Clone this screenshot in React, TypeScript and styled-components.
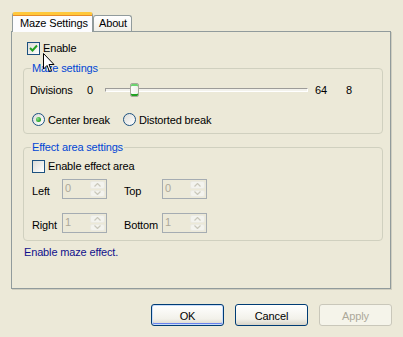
import React from 'react';
import styled, { createGlobalStyle } from 'styled-components';

const GlobalStyle = createGlobalStyle`
  html, body {
    margin: 0;
    padding: 0;
    background: #ece9d8;
  }
  body {
    font-family: "Liberation Sans", Arial, sans-serif;
    font-size: 11px;
    letter-spacing: -0.15px;
    color: #000;
  }
`;

const Dialog = styled.div`
  position: relative;
  width: 403px;
  height: 337px;
  box-sizing: border-box;
  padding: 12px 11px 0 11px;
  background: #ece9d8;
`;

const TabStrip = styled.div`
  display: flex;
  align-items: flex-end;
  height: 20px;
  padding-left: 1px;
  margin-bottom: -1px;
  position: relative;
  z-index: 1;
`;

const Tab = styled.div<{ $active?: boolean }>`
  box-sizing: border-box;
  height: ${p => (p.$active ? '20px' : '16px')};
  margin-bottom: ${p => (p.$active ? '0' : '1px')};
  padding-left: ${p => (p.$active ? '7px' : '5px')};
  border: 1px solid #919b9c;
  border-bottom: none;
  border-top: ${p => (p.$active ? '3px solid #ffc83c' : '1px solid #919b9c')};
  border-radius: 3px 3px 0 0;
  background: ${p => (p.$active ? '#fcfcfe' : 'linear-gradient(#ffffff, #f0efe9)')};
  line-height: ${p => (p.$active ? '16px' : '15px')};
  box-shadow: ${p => (p.$active ? 'inset 0 1px 0 #e68b2c' : 'none')};
  white-space: nowrap;
`;

const Panel = styled.div`
  box-sizing: border-box;
  width: 380px;
  height: 258px;
  border: 1px solid #919b9c;
  box-shadow: 1px 1px 0 #d0cebf;
  padding: 10px 7px 0 11px;
  background: #ece9d8;
`;

const CheckRow = styled.label<{ $indent?: number; $top?: number }>`
  display: flex;
  align-items: center;
  gap: 3px;
  height: 13px;
  line-height: 13px;
  margin-left: ${p => p.$indent ?? 0}px;
  margin-top: ${p => p.$top ?? 0}px;
`;

const Box = styled.span`
  box-sizing: border-box;
  width: 13px;
  height: 13px;
  border: 1px solid #1c5180;
  background: linear-gradient(135deg, #dcdcd7, #ffffff);
  display: flex;
  align-items: center;
  justify-content: center;
  flex: none;
`;

const RadioDot = styled.span`
  box-sizing: border-box;
  width: 13px;
  height: 13px;
  border: 1px solid #1c5180;
  border-radius: 50%;
  background: linear-gradient(135deg, #dcdcd7, #ffffff);
  display: flex;
  align-items: center;
  justify-content: center;
  flex: none;
`;

const Dot = styled.span`
  width: 5px;
  height: 5px;
  border-radius: 50%;
  background: radial-gradient(circle at 35% 35%, #8de08d, #21a121 70%);
`;

const Group = styled.fieldset<{ $padBottom: number }>`
  margin: 7px 0 0;
  padding: 0 8px ${p => p.$padBottom}px;
  border: 1px solid #d0d0bf;
  border-radius: 4px;
  min-width: 0;
`;

const Legend = styled.legend`
  color: #0046d5;
  padding: 0 1px;
  margin-left: -1px;
  line-height: 13px;
`;

const SliderRow = styled.div`
  display: flex;
  align-items: center;
  height: 14px;
  margin: 8px 0 0 -2px;
`;

const FixedText = styled.span<{ $w: number }>`
  width: ${p => p.$w}px;
  flex: none;
  white-space: nowrap;
`;

const Track = styled.div`
  position: relative;
  box-sizing: border-box;
  width: 203px;
  height: 4px;
  flex: none;
  border-top: 1px solid #9d9c99;
  border-left: 1px solid #9d9c99;
  border-bottom: 1px solid #ffffff;
  border-right: 1px solid #ffffff;
  background: #f3f2ec;
  margin-right: 7px;
`;

const Thumb = styled.div`
  position: absolute;
  top: -6px;
  box-sizing: border-box;
  width: 9px;
  height: 14px;
  border: 1px solid #a8a89c;
  border-radius: 2px;
  background: linear-gradient(90deg, #ffffff, #f0f0ea);
  box-shadow: inset 0 2px 0 #6cd36f, inset 0 -2px 0 #21a121;
`;

const RadioRow = styled.div`
  display: flex;
  align-items: center;
  height: 13px;
  margin-top: 16px;
`;

const RadioItem = styled.label<{ $w?: number }>`
  display: flex;
  align-items: center;
  gap: 3px;
  width: ${p => (p.$w ? `${p.$w}px` : 'auto')};
  white-space: nowrap;
`;

const SpinRow = styled.div<{ $top: number }>`
  display: flex;
  align-items: flex-end;
  height: 20px;
  margin-top: ${p => p.$top}px;
`;

const SpinLabel = styled.span<{ $w: number; $gap?: number }>`
  width: ${p => p.$w}px;
  margin-left: ${p => p.$gap ?? 0}px;
  flex: none;
  line-height: 13px;
  padding-bottom: 1px;
`;

const Spin = styled.div`
  box-sizing: border-box;
  width: 45px;
  height: 20px;
  flex: none;
  display: flex;
  border: 1px solid #a5acb2;
  background: #ece9d8;
`;

const SpinValue = styled.span`
  flex: 1;
  color: #aca899;
  padding: 2px 0 0 2px;
  line-height: 13px;
`;

const SpinButtons = styled.div`
  width: 15px;
  margin: 1px;
  display: flex;
  flex-direction: column;
  gap: 1px;
`;

const SpinButton = styled.div`
  flex: 1;
  background: #f3f3ee;
  border: 1px solid #ebeae2;
  border-radius: 2px;
  display: flex;
  align-items: center;
  justify-content: center;
`;

const Status = styled.div`
  margin: 5px 0 0 1px;
  color: #10108c;
  line-height: 13px;
`;

const ButtonRow = styled.div`
  display: flex;
  justify-content: flex-end;
  gap: 11px;
  margin-top: 15px;
`;

const Button = styled.button<{ $default?: boolean }>`
  box-sizing: border-box;
  width: 73px;
  height: 22px;
  padding: 1px 0 0;
  font-family: "Liberation Sans", Arial, sans-serif;
  font-size: 11px;
  letter-spacing: -0.15px;
  color: #000;
  border: 1px solid #003c74;
  border-radius: 3px;
  background: linear-gradient(#ffffff, #f2f1ea 70%, #d8d4c8);
  box-shadow: ${p =>
    p.$default ? 'inset 0 0 0 1px #c8dcf9, inset 0 -1px 0 1px #6982ee' : 'none'};

  &:disabled {
    color: #aca899;
    border-color: #c9c7ba;
    background: #f5f4ea;
  }
`;

const Cursor = styled.svg`
  position: absolute;
  left: 43px;
  top: 53px;
`;

const Check = () => (
  <svg width="9" height="9" viewBox="0 0 9 9">
    <path d="M1 4 L3.5 6.5 L8 1.5" fill="none" stroke="#21a121" strokeWidth="2" />
  </svg>
);

const Arrow = ({ up }: { up?: boolean }) => (
  <svg width="7" height="4" viewBox="0 0 7 4">
    <path d={up ? 'M0.5 3.5 L3.5 0.5 L6.5 3.5' : 'M0.5 0.5 L3.5 3.5 L6.5 0.5'} fill="none" stroke="#cac8bb" strokeWidth="1.2" />
  </svg>
);

const SpinBox = ({ value }: { value: string }) => (
  <Spin>
    <SpinValue>{value}</SpinValue>
    <SpinButtons>
      <SpinButton><Arrow up /></SpinButton>
      <SpinButton><Arrow /></SpinButton>
    </SpinButtons>
  </Spin>
);

const min = 0;
const max = 64;
const divisions = 8;

export default function App() {
  const thumbLeft = Math.round(((divisions - min) / (max - min)) * 203) - 1;
  return (
    <Dialog>
      <GlobalStyle />
      <TabStrip>
        <Tab $active style={{ width: 81 }}>Maze Settings</Tab>
        <Tab style={{ width: 39 }}>About</Tab>
      </TabStrip>
      <Panel>
        <CheckRow $indent={4}>
          <Box><Check /></Box>
          Enable
        </CheckRow>

        <Group $padBottom={7}>
          <Legend>Maze settings</Legend>
          <SliderRow>
            <FixedText $w={57}>Divisions</FixedText>
            <FixedText $w={18}>{min}</FixedText>
            <Track>
              <Thumb style={{ left: thumbLeft }} />
            </Track>
            <FixedText $w={31}>{max}</FixedText>
            <FixedText $w={10}>{divisions}</FixedText>
          </SliderRow>
          <RadioRow>
            <RadioItem $w={91}>
              <RadioDot><Dot /></RadioDot>
              Center break
            </RadioItem>
            <RadioItem>
              <RadioDot />
              Distorted break
            </RadioItem>
          </RadioRow>
        </Group>

        <Group $padBottom={7}>
          <Legend>Effect area settings</Legend>
          <CheckRow $top={6}>
            <Box />
            Enable effect area
          </CheckRow>
          <SpinRow $top={6}>
            <SpinLabel $w={30}>Left</SpinLabel>
            <SpinBox value="0" />
            <SpinLabel $w={38} $gap={17}>Top</SpinLabel>
            <SpinBox value="0" />
          </SpinRow>
          <SpinRow $top={14}>
            <SpinLabel $w={30}>Right</SpinLabel>
            <SpinBox value="1" />
            <SpinLabel $w={38} $gap={17}>Bottom</SpinLabel>
            <SpinBox value="1" />
          </SpinRow>
        </Group>

        <Status>Enable maze effect.</Status>
      </Panel>
      <ButtonRow>
        <Button $default>OK</Button>
        <Button>Cancel</Button>
        <Button disabled>Apply</Button>
      </ButtonRow>

      <Cursor width="12" height="20" viewBox="0 0 12 20">
        <path d="M0.5 0.5 L0.5 16 L4 12.5 L6.5 18.5 L8.5 17.5 L6 11.5 L11 11.5 Z" fill="#fff" stroke="#000" strokeWidth="1" />
      </Cursor>
    </Dialog>
  );
}
